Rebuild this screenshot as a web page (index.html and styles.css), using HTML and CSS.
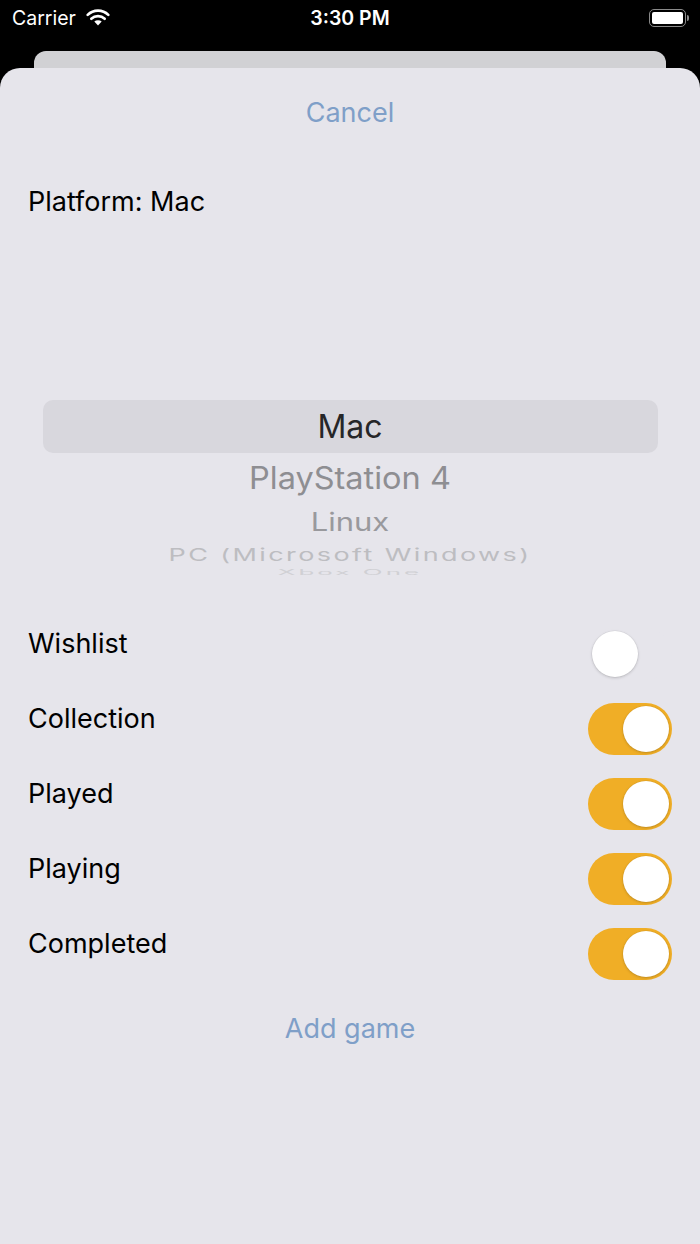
FILE: index.html
```html
<!DOCTYPE html>
<html lang="en">
<head>
    <meta charset="UTF-8">
    <meta name="viewport" content="width=device-width, initial-scale=1.0">
    <title>Add game</title>
    <link rel="stylesheet" href="styles.css">
</head>
<body>

    <!-- Status bar -->
    <div class="status-bar">
        <div class="status-left">
            <span>Carrier</span>
            <svg class="wifi" width="24" height="17" viewBox="0 0 24 17">
                <path d="M12 16.5 L8.3 12.6 A5.4 5.4 0 0 1 15.7 12.6 Z" fill="#fff"/>
                <path d="M5.3 9.8 A9.6 9.6 0 0 1 18.7 9.8" stroke="#fff" stroke-width="2.6" fill="none" stroke-linecap="round"/>
                <path d="M1.7 5.9 A14.6 14.6 0 0 1 22.3 5.9" stroke="#fff" stroke-width="2.6" fill="none" stroke-linecap="round"/>
            </svg>
        </div>
        <div class="status-time">3:30 PM</div>
        <div class="status-right">
            <div class="battery"><div class="battery-level"></div></div>
            <div class="battery-nub"></div>
        </div>
    </div>

    <div class="back-card"></div>

    <div class="sheet">
        <div class="link-button">Cancel</div>

        <div class="platform-label">Platform: Mac</div>

        <!-- Platform picker -->
        <div class="picker">
            <div class="picker-row selected">Mac</div>
            <div class="picker-row row-1"><span>PlayStation 4</span></div>
            <div class="picker-row row-2"><span>Linux</span></div>
            <div class="picker-row row-3"><span>PC (Microsoft Windows)</span></div>
            <div class="picker-row row-4"><span>Xbox One</span></div>
        </div>

        <div class="toggle-list">
            <div class="toggle-row">
                <span class="toggle-label">Wishlist</span>
                <div class="switch"><div class="knob"></div></div>
            </div>
            <div class="toggle-row">
                <span class="toggle-label">Collection</span>
                <div class="switch on"><div class="knob"></div></div>
            </div>
            <div class="toggle-row">
                <span class="toggle-label">Played</span>
                <div class="switch on"><div class="knob"></div></div>
            </div>
            <div class="toggle-row">
                <span class="toggle-label">Playing</span>
                <div class="switch on"><div class="knob"></div></div>
            </div>
            <div class="toggle-row">
                <span class="toggle-label">Completed</span>
                <div class="switch on"><div class="knob"></div></div>
            </div>
        </div>

        <div class="link-button add-game">Add game</div>
    </div>

</body>
</html>
```

FILE: styles.css
```css
* {
    margin: 0;
    padding: 0;
    box-sizing: border-box;
}

body {
    font-family: Inter, "Liberation Sans", sans-serif;
    background-color: #000;
    width: 700px;
    height: 1244px;
    overflow: hidden;
}

/* Status bar */
.status-bar {
    height: 36px;
    display: flex;
    align-items: center;
    justify-content: space-between;
    padding: 0 11px 0 12px;
    color: #fff;
    position: relative;
}

.status-left {
    display: flex;
    align-items: center;
    gap: 10px;
    font-size: 19.5px;
}

.wifi {
    margin-top: -2px;
}

.status-time {
    position: absolute;
    left: 0;
    right: 0;
    text-align: center;
    font-size: 19.5px;
    font-weight: 600;
}

.status-right {
    display: flex;
    align-items: center;
    gap: 1px;
}

.battery {
    width: 37px;
    height: 18px;
    border: 1.5px solid #8a8a8a;
    border-radius: 5px;
    padding: 2px;
}

.battery-level {
    width: 100%;
    height: 100%;
    background-color: #fff;
    border-radius: 2px;
}

.battery-nub {
    width: 2px;
    height: 6px;
    background-color: #8a8a8a;
    border-radius: 0 2px 2px 0;
}

.back-card {
    margin: 15px 34px 0;
    height: 17px;
    background-color: #d1d1d4;
    border-radius: 12px 12px 0 0;
}

/* Sheet */
.sheet {
    background-color: #e6e5eb;
    border-radius: 20px 20px 0 0;
    height: 1176px;
    padding-top: 25px;
}

.link-button {
    text-align: center;
    color: #7f9fc8;
    font-size: 27px;
    line-height: 40px;
}

.platform-label {
    margin-top: 49px;
    padding-left: 28px;
    font-size: 27px;
    line-height: 40px;
    color: #000;
}

/* Picker */
.picker {
    margin-top: 178px;
    display: flex;
    flex-direction: column;
    align-items: center;
    height: 182px;
    overflow: hidden;
}

.picker-row {
    width: 100%;
    display: flex;
    align-items: center;
    justify-content: center;
    white-space: nowrap;
    flex-shrink: 0;
}

.picker-row span {
    display: inline-block;
}

.picker-row.selected {
    width: 615px;
    height: 53px;
    background-color: #d8d7dd;
    border-radius: 10px;
    font-size: 32px;
    color: #262628;
}

.picker-row.row-1 {
    height: 51px;
    font-size: 32.5px;
    color: #8e8e92;
}

.picker-row.row-1 span {
    transform: scaleY(0.95);
}

.picker-row.row-2 {
    height: 35px;
    font-size: 31px;
    color: #99999d;
}

.picker-row.row-2 span {
    transform: scaleY(0.82);
}

.picker-row.row-3 {
    height: 33px;
    font-size: 27px;
    color: #bdbdc1;
    letter-spacing: 2.4px;
}

.picker-row.row-3 span {
    transform: scaleY(0.62);
}

.picker-row.row-4 {
    height: 10px;
    margin-top: -5px;
    font-size: 26px;
    color: #d0d0d4;
    letter-spacing: 3px;
}

.picker-row.row-4 span {
    transform: scaleY(0.28);
    line-height: 10px;
}

/* Toggles */
.toggle-list {
    margin-top: 42px;
}

.toggle-row {
    height: 75px;
    display: flex;
    justify-content: space-between;
    align-items: flex-start;
    padding: 0 28px;
}

.toggle-label {
    font-size: 27px;
    line-height: 40px;
    color: #000;
}

.switch {
    margin-top: 4px;
    width: 84px;
    height: 52px;
    border-radius: 26px;
    background-color: #e6e5eb;
    padding: 3px 4px;
    display: flex;
}

.switch.on {
    background-color: #f0ae26;
    justify-content: flex-end;
    padding: 3px;
}

.knob {
    width: 46px;
    height: 46px;
    border-radius: 50%;
    background-color: #fff;
    box-shadow: 0 1px 3px rgba(0, 0, 0, 0.18), 0 0 0 0.5px rgba(0, 0, 0, 0.06);
}

.add-game {
    margin-top: 10px;
}
```
